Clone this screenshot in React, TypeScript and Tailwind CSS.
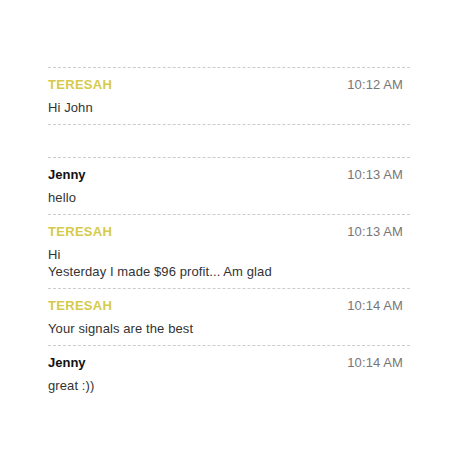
import React from "react";

interface Message {
  id: number;
  author: string;
  time: string;
  lines: string[];
}

const firstGroup: Message[] = [
  { id: 1, author: "TERESAH", time: "10:12 AM", lines: ["Hi John"] },
];

const secondGroup: Message[] = [
  { id: 2, author: "Jenny", time: "10:13 AM", lines: ["hello"] },
  { id: 3, author: "TERESAH", time: "10:13 AM", lines: ["Hi", "Yesterday I made $96 profit... Am glad"] },
  { id: 4, author: "TERESAH", time: "10:14 AM", lines: ["Your signals are the best"] },
  { id: 5, author: "Jenny", time: "10:14 AM", lines: ["great :))"] },
];

function MessageRow({ message }: { message: Message }) {
  const isTeresah = message.author === "TERESAH";
  return (
    <div className="border-t border-dashed border-[#cccccc] pt-[8px] pb-[8px]">
      <div className="flex items-center justify-between pr-[7px] leading-[17px]">
        <span
          className={
            isTeresah
              ? "text-[13px] font-bold tracking-[0.3px] text-[#d5ca4b]"
              : "text-[13px] font-bold text-[#111111]"
          }
        >
          {message.author}
        </span>
        <span className="text-[13px] tracking-[0.1px] text-[#777777]">{message.time}</span>
      </div>
      <div className="mt-[6px] text-[13px] leading-[17px] tracking-[0.1px] text-[#333333]">
        {message.lines.map((line, i) => (
          <div key={i}>{line}</div>
        ))}
      </div>
    </div>
  );
}

export default function App() {
  return (
    <div className="min-h-[471px] bg-white pt-[67px] pl-[48px] font-['Liberation_Sans',Arial,sans-serif]">
      <div className="w-[362px]">
        {/* first conversation */}
        <div className="border-b border-dashed border-[#cccccc]">
          {firstGroup.map((m) => (
            <MessageRow key={m.id} message={m} />
          ))}
        </div>

        {/* second conversation */}
        <div className="mt-[32px]">
          {secondGroup.map((m) => (
            <MessageRow key={m.id} message={m} />
          ))}
        </div>
      </div>
    </div>
  );
}
